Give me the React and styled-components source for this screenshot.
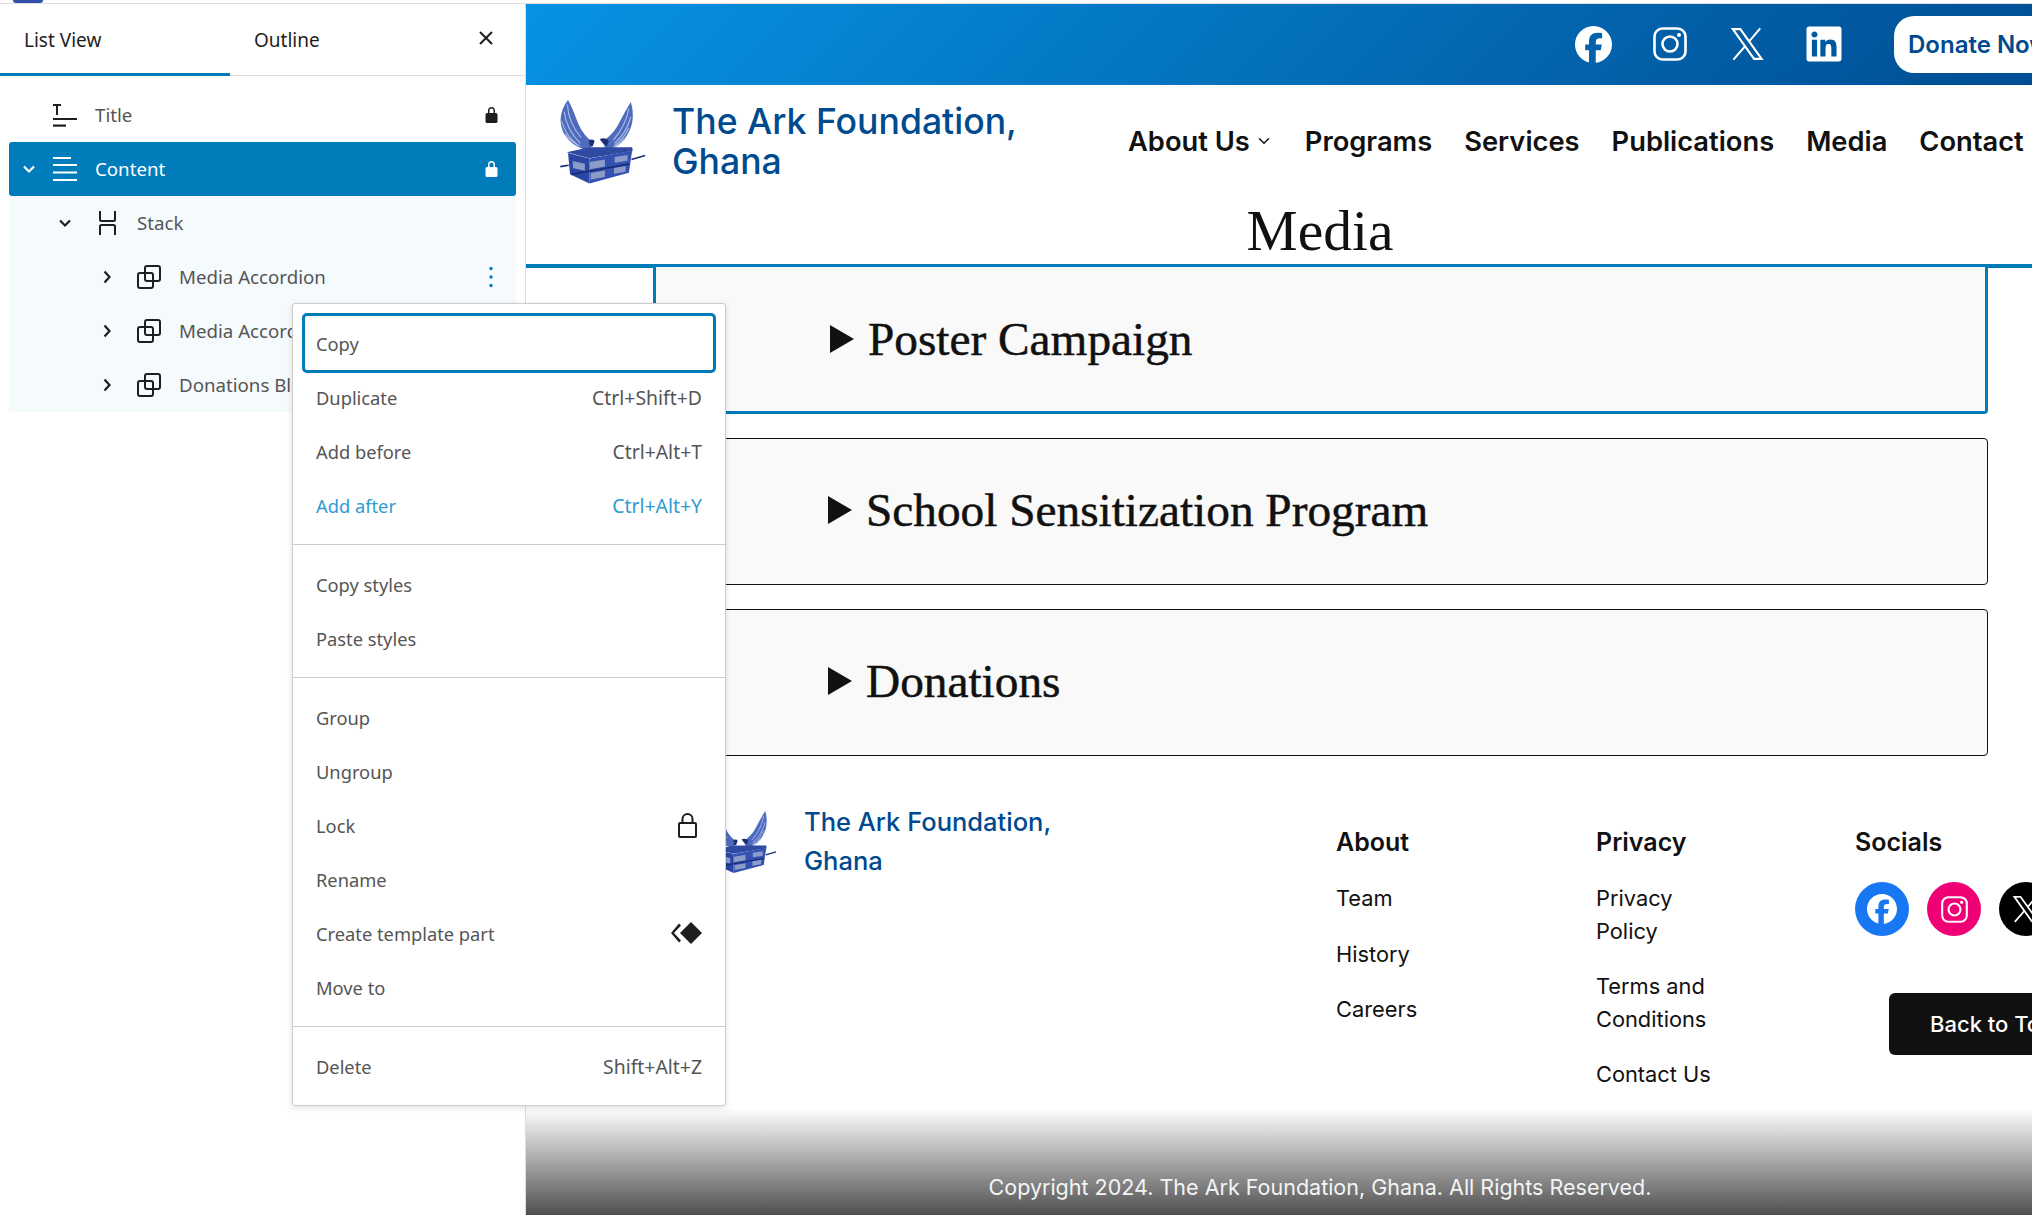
import styled, { createGlobalStyle } from "styled-components";
import { FaFacebook, FaLinkedin } from "react-icons/fa6";
import { ChevronDown } from "lucide-react";

const GlobalStyle = createGlobalStyle`
	html, body { margin: 0; padding: 0; background: #fff; }
	* { box-sizing: border-box; }
	ul { list-style: none; margin: 0; padding: 0; }
`;

const Page = styled.div`
	position: relative;
	width: 2032px;
	height: 1215px;
	overflow: hidden;
	display: flex;
	flex-direction: column;
	background: #fff;
`;
const TopEdge = styled.div`
	flex: none;
	height: 4px;
	background: #fff;
	border-bottom: 1px solid #ddd;
	overflow: hidden;
	padding-left: 13px;
`;
const TopEdgeLogo = styled.div`
	width: 30px;
	height: 3px;
	background: #2f4fa8;
	border-radius: 0 0 15px 15px;
`;
const Workspace = styled.div`
	flex: 1;
	display: flex;
	min-height: 0;
`;

/* list view panel */
const Panel = styled.aside`
	flex: none;
	width: 526px;
	border-right: 1px solid #ddd;
	font-family: "Noto Sans", "Open Sans", sans-serif;
	font-size: 18.7px;
`;
const Tabs = styled.div`
	display: flex;
	align-items: stretch;
	height: 72px;
	border-bottom: 1px solid #ddd;
`;
const Tab = styled.div`
	width: 230px;
	display: flex;
	align-items: center;
	padding: 0 0 0 24px;
	color: #1e1e1e;
	font-size: 19px;
	${(p) => p.$active && "box-shadow: inset 0 -3px 0 #007cba; margin-bottom: -1px;"}
`;
const CloseButton = styled.div`
	margin-left: 19px;
	display: flex;
	align-items: center;
	color: #1e1e1e;
	padding-bottom: 4px;
`;
const Tree = styled.div`
	padding: 12px 9px 0;
`;
const Row = styled.div`
	display: flex;
	align-items: center;
	height: 54px;
	padding-left: ${(p) => p.$indent}px;
	padding-right: 15px;
	color: ${(p) => (p.$selected ? "#fff" : "#555")};
	background: ${(p) => (p.$selected ? "#007cba" : p.$tinted ? "#f5fafd" : "transparent")};
	border-radius: ${(p) => (p.$selected ? "3px" : "0")};
`;
const ChevronSlot = styled.span`
	flex: none;
	width: 24px;
	margin-right: ${(p) => p.$gap}px;
	display: flex;
	justify-content: center;
	color: ${(p) => (p.$selected ? "#fff" : "#1e1e1e")};
`;
const BlockIcon = styled.span`
	flex: none;
	width: 30px;
	height: 30px;
	margin-right: 15px;
	display: flex;
	align-items: center;
	justify-content: center;
	color: ${(p) => (p.$selected ? "#fff" : "#1e1e1e")};
`;
const RowLabel = styled.span`
	flex: 1;
	padding-bottom: 2px;
	white-space: nowrap;
`;
const RowAction = styled.span`
	flex: none;
	display: flex;
	width: 20px;
	justify-content: center;
	color: ${(p) => p.$color};
`;

const Chevron = ({ dir }) => (
	<svg width="14" height="14" viewBox="0 0 14 14" fill="none" stroke="currentColor" strokeWidth="2.2">
		{dir === "down" ? <path d="M2 4.5 7 9.5 12 4.5" /> : <path d="M4.5 1.5 9.5 7 4.5 12.5" />}
	</svg>
);
const TitleIcon = () => (
	<svg width="24" height="26" viewBox="0 0 24 26" fill="currentColor">
		<path d="M0 2h8v2H5v9H3V4H0z" />
		<rect y="16" width="24" height="2" />
		<rect y="22.5" width="13" height="2.2" />
	</svg>
);
const ContentIcon = () => (
	<svg width="24" height="24" viewBox="0 0 24 24" fill="currentColor">
		<rect y="0" width="18" height="2" />
		<rect y="7" width="24" height="2" />
		<rect y="14.5" width="24" height="2" />
		<rect y="22" width="24" height="2" />
	</svg>
);
const StackIcon = () => (
	<svg width="17" height="24" viewBox="0 0 17 24" fill="none" stroke="currentColor" strokeWidth="2">
		<path d="M1 0v8.500a1.500 1.500 0 0 0 1.500 1.500h12a1.500 1.500 0 0 0 1.500-1.500V0" />
		<path d="M1 24v-8.500a1.500 1.500 0 0 1 1.500-1.500h12a1.500 1.500 0 0 1 1.500 1.500V24" />
	</svg>
);
const ReusableIcon = () => (
	<svg width="24" height="24" viewBox="0 0 24 24" fill="none" stroke="currentColor" strokeWidth="2">
		<rect x="8" y="1" width="15" height="15" rx="2" />
		<rect x="1" y="8" width="15" height="15" rx="2" />
	</svg>
);
const SmallLock = () => (
	<svg width="13" height="16" viewBox="0 0 13 16" fill="currentColor">
		<path d="M6.500 0C4.300 0 3 1.600 3 3.500V6H2a1.500 1.500 0 0 0-1.500 1.500v7A1.500 1.500 0 0 0 2 16h9a1.500 1.500 0 0 0 1.500-1.500v-7A1.500 1.500 0 0 0 11 6h-1V3.500C10 1.600 8.700 0 6.500 0zM4.500 6V3.500c0-1.200.8-2 2-2s2 .8 2 2V6z" />
	</svg>
);
const Dots = () => (
	<svg width="4" height="24" viewBox="0 0 4 24" fill="currentColor">
		<circle cx="2" cy="3.500" r="1.700" />
		<circle cx="2" cy="12" r="1.700" />
		<circle cx="2" cy="20.500" r="1.700" />
	</svg>
);

/* options menu over the list */
const Menu = styled.div`
	position: absolute;
	left: 292px;
	top: 303px;
	width: 434px;
	background: #fff;
	border: 1px solid #ccc;
	border-radius: 3px;
	box-shadow: 0 2px 6px rgba(0, 0, 0, 0.12);
	font-family: "Noto Sans", "Open Sans", sans-serif;
	z-index: 5;
`;
const MenuGroup = styled.div`
	padding: 13px 12px 11px;
	& + & {
		border-top: 1px solid #ccc;
	}
`;
const MenuItem = styled.div`
	display: flex;
	align-items: center;
	justify-content: space-between;
	height: 54px;
	padding: 0 11px 2px 11px;
	font-size: 18.3px;
	color: ${(p) => (p.$accent ? "#2f9bd0" : "#555")};
	${(p) => p.$focused && `
		border-radius: 2px;
		box-shadow: 0 0 0 3px #007cba;
		transform: translateY(-1px);
		padding-bottom: 0;
	`}
`;
const Shortcut = styled.span`
	font-size: 19.4px;
`;
const MenuIcon = styled.span`
	display: flex;
	color: #1e1e1e;
	margin-right: ${(p) => p.$inset}px;
`;

/* site preview */
const Main = styled.main`
	flex: none;
	width: 1588px;
	display: flex;
	flex-direction: column;
	font-family: Inter, "Liberation Sans", sans-serif;
	color: #111;
`;
const TopBar = styled.div`
	flex: none;
	height: 81px;
	display: flex;
	align-items: center;
	justify-content: flex-end;
	padding: 1px 20px 0 0;
	background: linear-gradient(135deg, #0693e3 0%, #004a8f 100%);
`;
const SocialRow = styled.div`
	display: flex;
	gap: 37px;
	margin-right: 50px;
	padding-bottom: 2px;
`;
const SocialLink = styled.span`
	width: 40px;
	height: 40px;
	display: flex;
	align-items: center;
	justify-content: center;
	color: #fff;
`;
const DonateButton = styled.div`
	flex: none;
	width: 200px;
	height: 57px;
	margin-bottom: 2px;
	display: flex;
	align-items: center;
	padding-left: 14px;
	background: #fff;
	border-radius: 20px;
	color: #004a8f;
	font-size: 24px;
	font-weight: 600;
	white-space: nowrap;
`;
const Header = styled.header`
	flex: none;
	height: 112px;
	display: flex;
	align-items: flex-start;
	padding: 13px 0 0 33px;
`;
const Brand = styled.div`
	flex: none;
	width: 569px;
	display: flex;
	gap: 25px;
`;
const HeaderLogo = styled.div`
	flex: none;
	width: 88px;
	height: 88px;
`;
const BrandName = styled.div`
	padding-top: 4px;
	font-size: 35.6px;
	font-weight: 500;
	line-height: 40px;
	color: #004a8f;
`;
const Nav = styled.nav`
	display: flex;
	align-items: center;
	gap: 32px;
	height: 86px;
`;
const NavLink = styled.span`
	display: flex;
	align-items: center;
	gap: 5px;
	font-size: 27.3px;
	font-weight: 600;
	white-space: nowrap;
	color: #111;
`;
const PageTitle = styled.h1`
	flex: none;
	margin: 0;
	height: 67px;
	line-height: 67px;
	text-align: center;
	font-family: "Liberation Serif", serif;
	font-size: 57.5px;
	font-weight: 400;
	color: #111;
`;
const Accordions = styled.section`
	flex: none;
	display: flex;
	flex-direction: column;
	gap: 24px;
	border-top: 4px solid #007cba;
	padding: 0 126px 0 127px;
`;
const Accordion = styled.div`
	height: 147px;
	display: flex;
	align-items: center;
	gap: 14px;
	padding: 0 0 4px 174px;
	background: #f9f9f9;
	border: ${(p) => (p.$selected ? "3px solid #007cba" : "1px solid #111")};
	border-radius: 4px;
	${(p) => p.$selected && "border-top: none; margin-top: -1px; padding-bottom: 0; border-radius: 0 0 4px 4px;"}
`;
const Arrow = styled.span`
	flex: none;
	width: 0;
	height: 0;
	border-left: 24px solid #111;
	border-top: 14px solid transparent;
	border-bottom: 14px solid transparent;
`;
const AccordionTitle = styled.span`
	font-family: "Liberation Serif", serif;
	font-size: 47.3px;
	font-weight: 400;
	-webkit-text-stroke: 0.5px #111;
	white-space: nowrap;
	color: #111;
`;
const Footer = styled.footer`
	flex: 1;
	display: flex;
	flex-direction: column;
`;
const FooterBody = styled.div`
	flex: 1;
	display: flex;
	align-items: flex-start;
	padding: 46px 0 0 184px;
`;
const FooterBrand = styled.div`
	flex: none;
	width: 626px;
	display: flex;
	gap: 26px;
`;
const FooterLogo = styled.div`
	flex: none;
	width: 68px;
	height: 67px;
	margin-top: 6px;
`;
const FooterBrandName = styled.div`
	font-size: 25.5px;
	font-weight: 500;
	line-height: 39px;
	color: #004a8f;
`;
const FooterColumn = styled.div`
	flex: none;
	width: ${(p) => p.$width}px;
	margin-top: 24px;
`;
const ColumnTitle = styled.h3`
	margin: 0 0 23px;
	font-size: 25px;
	font-weight: 600;
	line-height: 33px;
	color: #111;
`;
const LinkList = styled.ul`
	display: flex;
	flex-direction: column;
	gap: 23.2px;
	width: 125px;
`;
const LinkItem = styled.li`
	font-size: 21.8px;
	line-height: 32.5px;
	color: #111;
`;
const Discs = styled.div`
	display: flex;
	gap: 18px;
`;
const Disc = styled.span`
	flex: none;
	width: 54px;
	height: 54px;
	border-radius: 50%;
	display: flex;
	align-items: center;
	justify-content: center;
	color: #fff;
	background: ${(p) => p.$color};
`;
const BackToTop = styled.div`
	width: 200px;
	height: 62px;
	margin: 57px 0 0 34px;
	display: flex;
	align-items: center;
	padding-left: 41px;
	background: #111;
	border-radius: 6px;
	color: #fff;
	font-size: 22px;
	font-weight: 500;
	white-space: nowrap;
`;
const Copyright = styled.div`
	flex: none;
	height: 107px;
	display: flex;
	align-items: flex-end;
	justify-content: center;
	padding-bottom: 12px;
	background: linear-gradient(180deg, #fff 0%, #4f4f4f 100%);
	color: #f4f4f4;
	font-size: 21.5px;
	line-height: 32px;
`;

const ArkLogo = () => (
	<svg width="100%" height="100%" viewBox="24 20 272 272">
		<path d="M52 26C36 45 26 75 30 102c4 26 20 48 44 64 16 10 32 15 46 14l6-26C110 142 94 124 84 100 74 76 66 50 52 26z" fill="#4f6bbd" />
		<path d="M246 32c-14 22-26 46-38 68-10 20-28 40-50 54l10 24c22 0 40-10 54-26 18-20 28-44 30-70 1-18-1-34-6-50z" fill="#4f6bbd" />
		<path d="M50 40c2 36 14 70 42 102M40 62c4 34 20 68 50 98M32 92c8 28 24 54 54 76M42 130c12 16 28 30 48 40M240 52c-6 34-22 68-48 98M246 78c-8 30-24 60-50 82M240 112c-10 22-24 42-44 54M226 146c-10 12-20 20-34 26" fill="none" stroke="#a9bae6" strokeWidth="3.500" />
		<path d="M116 152c6-6 16-4 18 2l-6 16h-8zM150 148c8-6 24-4 28 6l-6 14-12-8z" fill="#1d2f74" />
		<path d="M48 188l70-16 132 0 2 12-134 22z" fill="#2f4aa0" />
		<path d="M52 190l66 17v77l-60-28z" fill="#2a47a6" />
		<path d="M118 207l132-24-10 68-122 33z" fill="#3451b2" />
		<path d="M66 215l38 8v22l-36-8zM120 218l46-8v22l-46 8zM196 202l40-6v18l-40 6zM122 252l44-8v20l-44 8zM194 236l36-6v18l-36 6z" fill="#8c9cc8" />
		<path d="M28 232l26-4M62 256l180-32M248 210l42-12" stroke="#1a2c78" strokeWidth="5" fill="none" />
	</svg>
);

const InstagramGlyph = ({ size }) => (
	<svg width={size} height={size} viewBox="0 0 34 34" fill="none" stroke="currentColor" strokeWidth="2.600">
		<rect x="1.500" y="1.500" width="31" height="31" rx="8" />
		<circle cx="17" cy="17" r="7.500" />
		<circle cx="26" cy="8" r="2" fill="currentColor" stroke="none" />
	</svg>
);

const XGlyph = ({ size }) => (
	<svg width={size} height={size} viewBox="0 0 24 24" fill="none" stroke="currentColor" strokeWidth="1.500">
		<path d="M2 1.500h5.300L22.300 22.500H17z" />
		<path d="M21.300 1 13.400 10.300M10.700 13.500 2.400 23" />
	</svg>
);

const menuGroups = [
	[
		{ label: "Copy", focused: true },
		{ label: "Duplicate", shortcut: "Ctrl+Shift+D" },
		{ label: "Add before", shortcut: "Ctrl+Alt+T" },
		{ label: "Add after", shortcut: "Ctrl+Alt+Y", accent: true },
	],
	[{ label: "Copy styles" }, { label: "Paste styles" }],
	[
		{ label: "Group" },
		{ label: "Ungroup" },
		{ label: "Lock", icon: "lock" },
		{ label: "Rename" },
		{ label: "Create template part", icon: "part" },
		{ label: "Move to" },
	],
	[{ label: "Delete", shortcut: "Shift+Alt+Z" }],
];

export default function App() {
	return (
		<>
			<GlobalStyle />
			<Page>
				<TopEdge>
					<TopEdgeLogo />
				</TopEdge>
				<Workspace>
					<Panel>
						<Tabs>
							<Tab $active>List View</Tab>
							<Tab>Outline</Tab>
							<CloseButton>
								<svg width="14" height="14" viewBox="0 0 14 14" stroke="currentColor" strokeWidth="2">
									<path d="M1 1l12 12M13 1 1 13" />
								</svg>
							</CloseButton>
						</Tabs>
						<Tree>
							<Row $indent={8}>
								<ChevronSlot $gap={9} />
								<BlockIcon><TitleIcon /></BlockIcon>
								<RowLabel>Title</RowLabel>
								<RowAction $color="#1e1e1e"><SmallLock /></RowAction>
							</Row>
							<Row $indent={8} $selected>
								<ChevronSlot $gap={9} $selected><Chevron dir="down" /></ChevronSlot>
								<BlockIcon $selected><ContentIcon /></BlockIcon>
								<RowLabel>Content</RowLabel>
								<RowAction $color="#fff"><SmallLock /></RowAction>
							</Row>
							<Row $indent={44} $tinted>
								<ChevronSlot $gap={15}><Chevron dir="down" /></ChevronSlot>
								<BlockIcon><StackIcon /></BlockIcon>
								<RowLabel>Stack</RowLabel>
							</Row>
							<Row $indent={86} $tinted>
								<ChevronSlot $gap={15}><Chevron dir="right" /></ChevronSlot>
								<BlockIcon><ReusableIcon /></BlockIcon>
								<RowLabel>Media Accordion</RowLabel>
								<RowAction $color="#007cba"><Dots /></RowAction>
							</Row>
							<Row $indent={86} $tinted>
								<ChevronSlot $gap={15}><Chevron dir="right" /></ChevronSlot>
								<BlockIcon><ReusableIcon /></BlockIcon>
								<RowLabel>Media Accordion</RowLabel>
							</Row>
							<Row $indent={86} $tinted>
								<ChevronSlot $gap={15}><Chevron dir="right" /></ChevronSlot>
								<BlockIcon><ReusableIcon /></BlockIcon>
								<RowLabel>Donations Block</RowLabel>
							</Row>
						</Tree>
					</Panel>
					<Main>
						<TopBar>
							<SocialRow>
								<SocialLink><FaFacebook size={37} /></SocialLink>
								<SocialLink><InstagramGlyph size={34} /></SocialLink>
								<SocialLink><XGlyph size={34} /></SocialLink>
								<SocialLink><FaLinkedin size={40} /></SocialLink>
							</SocialRow>
							<DonateButton>Donate Now</DonateButton>
						</TopBar>
						<Header>
							<Brand>
								<HeaderLogo><ArkLogo /></HeaderLogo>
								<BrandName>The Ark Foundation,<br />Ghana</BrandName>
							</Brand>
							<Nav>
								<NavLink>About Us <ChevronDown size={18} strokeWidth={2} /></NavLink>
								<NavLink>Programs</NavLink>
								<NavLink>Services</NavLink>
								<NavLink>Publications</NavLink>
								<NavLink>Media</NavLink>
								<NavLink>Contact</NavLink>
							</Nav>
						</Header>
						<PageTitle>Media</PageTitle>
						<Accordions>
							<Accordion $selected><Arrow /><AccordionTitle>Poster Campaign</AccordionTitle></Accordion>
							<Accordion><Arrow /><AccordionTitle>School Sensitization Program</AccordionTitle></Accordion>
							<Accordion><Arrow /><AccordionTitle>Donations</AccordionTitle></Accordion>
						</Accordions>
						<Footer>
							<FooterBody>
								<FooterBrand>
									<FooterLogo><ArkLogo /></FooterLogo>
									<FooterBrandName>The Ark Foundation,<br />Ghana</FooterBrandName>
								</FooterBrand>
								<FooterColumn $width={260}>
									<ColumnTitle>About</ColumnTitle>
									<LinkList>
										<LinkItem>Team</LinkItem>
										<LinkItem>History</LinkItem>
										<LinkItem>Careers</LinkItem>
									</LinkList>
								</FooterColumn>
								<FooterColumn $width={259}>
									<ColumnTitle>Privacy</ColumnTitle>
									<LinkList>
										<LinkItem>Privacy Policy</LinkItem>
										<LinkItem>Terms and Conditions</LinkItem>
										<LinkItem>Contact Us</LinkItem>
									</LinkList>
								</FooterColumn>
								<FooterColumn $width={240}>
									<ColumnTitle>Socials</ColumnTitle>
									<Discs>
										<Disc $color="#1877f2"><FaFacebook size={30} /></Disc>
										<Disc $color="#f00075"><InstagramGlyph size={27} /></Disc>
										<Disc $color="#000"><XGlyph size={28} /></Disc>
									</Discs>
									<BackToTop>Back to Top</BackToTop>
								</FooterColumn>
							</FooterBody>
							<Copyright>Copyright 2024. The Ark Foundation, Ghana. All Rights Reserved.</Copyright>
						</Footer>
					</Main>
				</Workspace>
				<Menu>
					{menuGroups.map((group, i) => (
						<MenuGroup key={i}>
							{group.map((item) => (
								<MenuItem key={item.label} $accent={item.accent} $focused={item.focused}>
									<span>{item.label}</span>
									{item.shortcut && <Shortcut>{item.shortcut}</Shortcut>}
									{item.icon === "lock" && (
										<MenuIcon $inset={5}>
											<svg width="19" height="25" viewBox="0 0 19 25" fill="none" stroke="currentColor" strokeWidth="2">
												<rect x="1" y="10" width="17" height="14" rx="1" />
												<path d="M4.500 10V6a5 5 0 0 1 10 0v4" />
											</svg>
										</MenuIcon>
									)}
									{item.icon === "part" && (
										<MenuIcon $inset={0}>
											<svg width="31" height="22" viewBox="0 0 31 22" fill="currentColor">
												<path d="M20 0 31 11 20 22 9 11z" />
												<path d="M8 1.500 10 3.500 3 11l7 7.500-2 2L0 11z" />
											</svg>
										</MenuIcon>
									)}
								</MenuItem>
							))}
						</MenuGroup>
					))}
				</Menu>
			</Page>
		</>
	);
}
